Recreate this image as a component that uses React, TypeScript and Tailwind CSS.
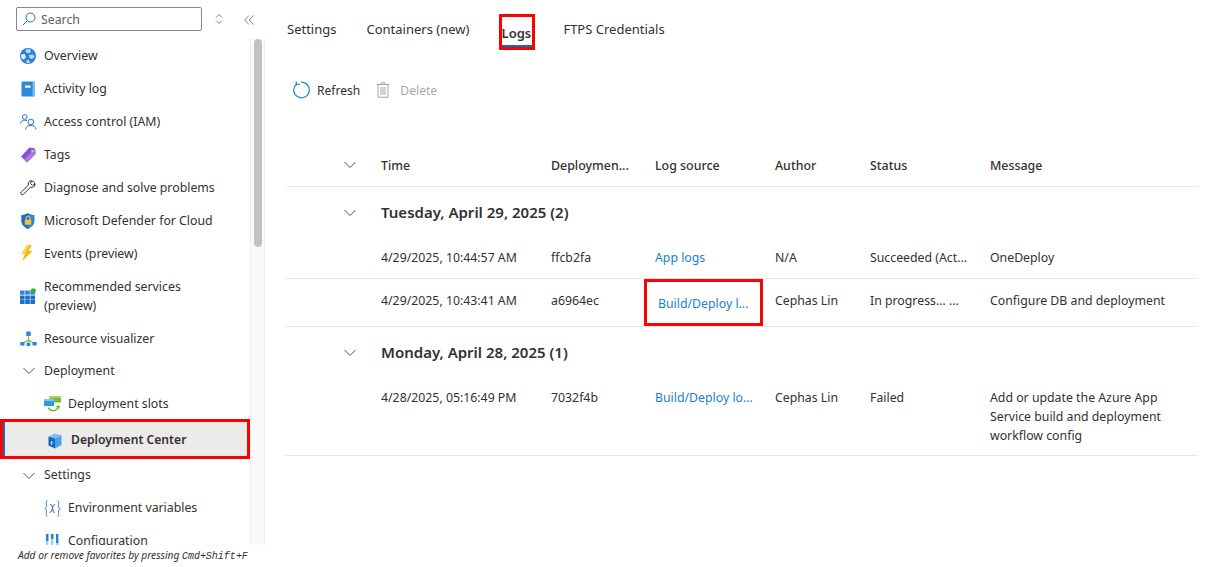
import React from "react";

function Chevron({ className = "" }: { className?: string }) {
  return (
    <svg width="14" height="14" viewBox="0 0 14 14" className={className} fill="none" stroke="#505050" strokeWidth="1">
      <path d="M1.5 4 L7 9.5 L12.5 4" />
    </svg>
  );
}

const Overview = () => (
  <svg width="16" height="16" viewBox="0 0 16 16">
    <circle cx="8" cy="8" r="8" fill="#2f7fd6" />
    <path d="M6 1.5 L10 1 L11 4 L8 5.5 L5.5 4z" fill="#bcdcf5" />
    <path d="M1 6.5 L4.5 6 L6 9 L4 11.5 L1.5 10.5z" fill="#e3f1fb" />
    <path d="M9 7 L13 6.5 L14.5 9 L12 11 L9.5 10z" fill="#bcdcf5" />
    <path d="M6 12.5 L9 12 L10 15 L7 15z" fill="#bcdcf5" />
  </svg>
);
const ActivityLog = () => (
  <svg width="16" height="16" viewBox="0 0 16 16">
    <rect x="1.5" y="0.5" width="13" height="15" rx="1.2" fill="#2b8ad8" />
    <rect x="12.5" y="0.5" width="2" height="15" rx="0.6" fill="#7ab8e8" />
    <rect x="5" y="4.5" width="5.5" height="2.2" fill="#ffffff" />
  </svg>
);
const Access = () => (
  <svg width="17" height="16" viewBox="0 0 17 16" fill="none" stroke="#1f76d2" strokeWidth="1">
    <circle cx="4.8" cy="3" r="2.3" />
    <path d="M0.5 9.5 C1 6.8 3 6.2 4.8 6.2 C5.8 6.2 6.5 6.4 7 6.7" />
    <circle cx="10.8" cy="8" r="2.8" />
    <path d="M5.5 15.5 C6 12.5 8 11.4 10.8 11.4 C13.6 11.4 15.5 12.5 16 15.5" />
  </svg>
);
const Tag = () => (
  <svg width="16" height="16" viewBox="0 0 16 16">
    <path d="M9.5 0.5 L15 1.5 L15.5 7 L7 15.5 L1 9.5z" fill="#8652d4" />
    <path d="M15 1.5 L15.5 7 L7 15.5 L4 12.5z" fill="#a77be2" />
    <circle cx="12.3" cy="4" r="1" fill="#e8dcf8" />
  </svg>
);
const Wrench = () => (
  <svg width="16" height="16" viewBox="0 0 16 16" fill="none" stroke="#303030" strokeWidth="1">
    <path d="M9.8 1 C12 0.3 15 1.5 15 4.5 C15 6.8 12.8 8 10.5 7.2 L3.6 14.2 C2.8 15 1.2 14.9 0.9 13.8 C0.6 13 0.9 12.5 1.5 11.9 L8.5 5 C8 3.5 8.3 2 9.8 1 Z" />
    <path d="M11.5 1 L10.5 3.5 L12.5 5.3 L15 4.2" />
  </svg>
);
const Shield = () => (
  <svg width="16" height="16" viewBox="0 0 16 16">
    <path d="M8 0 C10 1.5 12 2 14.5 2 L14.5 8 C14.5 12 11 14.5 8 16 C5 14.5 1.5 12 1.5 8 L1.5 2 C4 2 6 1.5 8 0z" fill="#2b87dc" />
    <path d="M8 0 C6 1.5 4 2 1.5 2 L1.5 8 C1.5 12 5 14.5 8 16z" fill="#1f6fc0" />
    <rect x="4.8" y="6.8" width="6.4" height="5" rx="0.6" fill="#f5c13d" />
    <path d="M6 7 V5.3 A2 2 0 0 1 10 5.3 V7" fill="none" stroke="#f5c13d" strokeWidth="1.1" />
  </svg>
);
const Bolt = () => (
  <svg width="14" height="17" viewBox="0 0 14 17">
    <path d="M7 0 L12 0 L8.5 6 L12.5 6 L2 16.5 L5 8.5 L1.5 8.5z" fill="#fcb714" />
    <path d="M7 0 L9.5 0 L5 8.5 L1.5 8.5z" fill="#fdd25e" />
  </svg>
);
const Grid = () => (
  <svg width="16" height="16" viewBox="0 0 16 16">
    {[2.5, 7.5, 12].map((y) =>
      [0, 5.2, 10.4].map((x) => <rect key={`${x}-${y}`} x={x} y={y} width="4.6" height="4.2" fill={y === 2.5 ? "#2a86d8" : "#1870c8"} />)
    )}
    <circle cx="13.3" cy="2.8" r="2.6" fill="#3fa845" />
  </svg>
);
const Visualizer = () => (
  <svg width="17" height="16" viewBox="0 0 17 16">
    <path d="M8.5 4 V11 M8.5 9 L2.5 12.5 M8.5 9 L14.5 12.5" stroke="#86c440" strokeWidth="1.2" fill="none" />
    <rect x="6.3" y="0.5" width="4.4" height="4.4" rx="0.5" fill="#2a86d8" />
    <rect x="0.3" y="11" width="4.2" height="3.6" rx="0.5" fill="#2a86d8" />
    <rect x="6.6" y="11.5" width="3.8" height="3.6" rx="0.5" fill="#2a86d8" />
    <rect x="12.5" y="11" width="4.2" height="3.6" rx="0.5" fill="#2a86d8" />
  </svg>
);
const Slots = () => (
  <svg width="17" height="16" viewBox="0 0 17 16">
    <rect x="5.5" y="0" width="11.5" height="6.5" fill="#7ab82f" />
    <rect x="5.5" y="0" width="11.5" height="2" fill="#a6d56a" />
    <rect x="0" y="3" width="10" height="7" fill="#2b9be0" />
    <rect x="0" y="3" width="10" height="2" fill="#7fc8f2" />
    <path d="M4.5 11.5 C5.5 15 11 16 13.5 12.5" fill="none" stroke="#6fb52c" strokeWidth="1.4" />
    <path d="M11.5 10 L16 9.5 L15 13.5z" fill="#6fb52c" />
  </svg>
);
const Cube = () => (
  <svg width="16" height="16" viewBox="0 0 16 16">
    <path d="M1.5 3.5 L8 0.5 L14.5 2.5 L8 5.5z" fill="#7cc0ef" />
    <path d="M8 5.5 L14.5 2.5 L14.5 12 L8 15.5z" fill="#4aa3e6" />
    <path d="M1.5 3.5 L8 5.5 L8 15.5 L1.5 12.5z" fill="#1768bc" />
    <path d="M4.7 12 V8.5 M3.6 9.6 L4.7 8.4 L5.8 9.6" stroke="#fff" strokeWidth="0.8" fill="none" />
  </svg>
);
const EnvVars = () => (
  <svg width="17" height="17" viewBox="0 0 17 17" fill="none" stroke="#3d8ed8" strokeWidth="1">
    <path d="M3.5 0.5 C1.5 0.5 2.5 3.5 2.5 6 C2.5 7.5 1.8 8.3 0.7 8.5 C1.8 8.7 2.5 9.5 2.5 11 C2.5 13.5 1.5 16.5 3.5 16.5" />
    <path d="M13.5 0.5 C15.5 0.5 14.5 3.5 14.5 6 C14.5 7.5 15.2 8.3 16.3 8.5 C15.2 8.7 14.5 9.5 14.5 11 C14.5 13.5 15.5 16.5 13.5 16.5" />
    <path d="M6.2 4.5 C7.5 4 8 5 8.3 7 L9.3 12 C9.8 13 10.3 12.5 10.8 12 M11.2 4.5 C10 4.5 9 6 8.5 8 C8 10 7 12.8 5.6 12.3" stroke="#505a78" />
  </svg>
);
const Config = () => (
  <svg width="14" height="16" viewBox="0 0 14 16" className="ml-px">
    <rect x="1" y="0" width="2.4" height="16" fill="#9fd4f5" />
    <rect x="1" y="0" width="2.4" height="7" fill="#1f84d8" />
    <rect x="6" y="0" width="2.4" height="16" fill="#9fd4f5" />
    <rect x="6" y="0" width="2.4" height="5" fill="#1f84d8" />
    <rect x="11" y="0" width="2.4" height="16" fill="#1f84d8" />
    <rect x="11" y="9" width="2.4" height="7" fill="#9fd4f5" />
  </svg>
);

function NavItem({ icon, label, cls = "h-[33px]" }: { icon: React.ReactNode; label: React.ReactNode; cls?: string }) {
  return (
    <div className={`flex items-center ${cls}`}>
      <div className="w-[44px] pl-[20px] flex items-center shrink-0">{icon}</div>
      <div className="leading-[19px]">{label}</div>
    </div>
  );
}
function SubItem({ icon, label, cls = "h-[33px]" }: { icon: React.ReactNode; label: string; cls?: string }) {
  return (
    <div className={`flex items-center ${cls}`}>
      <div className="w-[68px] pl-[44px] flex items-center shrink-0">{icon}</div>
      <div>{label}</div>
    </div>
  );
}
function GroupItem({ label, cls = "h-[33px]" }: { label: string; cls?: string }) {
  return (
    <div className={`flex items-center ${cls}`}>
      <div className="w-[44px] pl-[22px] flex items-center shrink-0"><Chevron /></div>
      <div>{label}</div>
    </div>
  );
}

const grid = "grid grid-cols-[96px_170px_104px_120px_95px_120px_208px]";
const mono = "font-['Liberation_Mono',monospace] text-[10px]";

export default function App() {
  return (
    <div className="flex w-[1218px] h-[567px] overflow-hidden bg-white text-[#323130] text-[12.3px] font-['Noto_Sans','Open_Sans',sans-serif]">
      <aside className="w-[265px] shrink-0 flex flex-col h-full">
        <div className="h-[39px] flex items-start pt-[7px] pl-[16px] shrink-0">
          <div className="w-[186px] h-[24px] border border-[#8a8886] rounded-[2px] flex items-center pl-[5px] gap-[5px] text-[#605e5c]">
            <svg width="14" height="14" viewBox="0 0 14 14" fill="none" stroke="#1f76d2" strokeWidth="1">
              <circle cx="8.5" cy="5.5" r="4.5" />
              <path d="M5.2 8.8 L0.8 13.2" />
            </svg>
            <span className="pt-[2px]">Search</span>
          </div>
          <svg width="10" height="12" viewBox="0 0 10 12" className="ml-[12px] mt-[6px]" fill="none" stroke="#777" strokeWidth="0.9">
            <path d="M2 4.5 L5 1.5 L8 4.5 M2 7.5 L5 10.5 L8 7.5" />
          </svg>
          <svg width="10" height="10" viewBox="0 0 10 10" className="ml-[20px] mt-[8px]" fill="none" stroke="#777" strokeWidth="0.9">
            <path d="M5 0.5 L0.7 5 L5 9.5 M9.5 0.5 L5.2 5 L9.5 9.5" />
          </svg>
        </div>
        <div className="flex-1 min-h-0 flex">
          <nav className="w-[250px] shrink-0 overflow-hidden">
            <NavItem icon={<Overview />} label="Overview" />
            <NavItem icon={<ActivityLog />} label="Activity log" />
            <NavItem icon={<Access />} label="Access control (IAM)" />
            <NavItem icon={<Tag />} label="Tags" />
            <NavItem icon={<Wrench />} label="Diagnose and solve problems" />
            <NavItem icon={<Shield />} label="Microsoft Defender for Cloud" />
            <NavItem icon={<Bolt />} label="Events (preview)" />
            <NavItem icon={<Grid />} label={<>Recommended services<br />(preview)</>} cls="h-[52px]" />
            <NavItem icon={<Visualizer />} label="Resource visualizer" />
            <GroupItem label="Deployment" cls="h-[32px]" />
            <SubItem icon={<Slots />} label="Deployment slots" cls="h-[32px] pt-[2px]" />
            <div className="h-[40px] border-[3px] border-[#ff0000] flex items-center bg-[#edebe9] font-semibold text-[12.15px] relative pt-[3px]">
              <div className="absolute left-0 top-0 bottom-0 w-[2px] bg-[#0f6cbd]" />
              <div className="w-[68px] pl-[47px] shrink-0 flex items-center -ml-[3px] mr-[3px]"><Cube /></div>
              <span>Deployment Center</span>
            </div>
            <GroupItem label="Settings" />
            <SubItem icon={<EnvVars />} label="Environment variables" />
            <SubItem icon={<Config />} label="Configuration" />
          </nav>
          <div className="w-[15px] shrink-0 bg-[#fafafa] border-x border-[#eeeeee] flex justify-center">
            <div className="w-[8px] h-[208px] bg-[#c1c1c1] rounded-full" />
          </div>
        </div>
        <div className="h-[22px] shrink-0 bg-white pl-[18px] text-[10.2px] italic leading-[21px] text-[#323130] whitespace-nowrap">
          Add or remove favorites by pressing <span className={mono}>Cmd</span>+<span className={mono}>Shift</span>+<span className={mono}>F</span>
        </div>
      </aside>

      <main className="flex-1 min-w-0 pl-[20px]">
        <div className="flex items-start h-[50px] text-[13px]">
          <div className="mt-[20px] leading-[18px] mr-[30px] ml-[2px]">Settings</div>
          <div className="mt-[20px] leading-[18px] mr-[30px]">Containers (new)</div>
          <div className="mt-[14px] h-[36px] w-[36px] border-[3px] border-[#ff0000] mr-[28px] flex flex-col items-center justify-end font-semibold">
            <span className="leading-[18px] pb-[3px] -ml-[2px]">Logs</span>
            <div className="h-[2px] w-[30px] bg-[#0f6cbd]" />
          </div>
          <div className="mt-[20px] leading-[18px]">FTPS Credentials</div>
        </div>
        <div className="flex items-center h-[80px] pl-[7px] text-[12.1px]">
          <svg width="18" height="18" viewBox="0 0 18 18" fill="none" stroke="#1f84d8" strokeWidth="1.2">
            <path d="M4.5 3 A7.8 7.8 0 1 0 9 1.2" />
            <path d="M4.2 0.5 L4.5 3.6 L7.8 3.4" />
          </svg>
          <span className="ml-[7px] pt-[2px]">Refresh</span>
          <svg width="14" height="16" viewBox="0 0 14 16" className="ml-[16px]" fill="none" stroke="#a6a6a6" strokeWidth="1">
            <path d="M0.5 2.5 H13.5 M5 2.5 V0.8 H9 V2.5 M2 2.5 V15.2 H12 V2.5 M5 5 V13 M7 5 V13 M9 5 V13" />
          </svg>
          <span className="ml-[10px] pt-[2px] text-[#a6a6a6]">Delete</span>
        </div>

        <div className="w-[913px]">
          <div className={`${grid} h-[57px] items-end pb-[10px] border-b border-[#e8e8e8] font-medium text-[12.4px]`}>
            <div className="pl-[58px] pb-[4px]"><Chevron /></div>
            <div>Time</div>
            <div className="whitespace-nowrap">Deploymen...</div>
            <div>Log source</div>
            <div>Author</div>
            <div>Status</div>
            <div>Message</div>
          </div>
          <div className="flex items-center h-[51px] text-[15px] font-semibold">
            <div className="w-[96px] pl-[58px]"><Chevron /></div>
            <div>Tuesday, April 29, 2025 (2)</div>
          </div>
          <div className={`${grid} h-[41px] items-center border-b border-[#e8e8e8]`}>
            <div />
            <div>4/29/2025, 10:44:57 AM</div>
            <div>ffcb2fa</div>
            <div className="text-[#1a7fd4]">App logs</div>
            <div>N/A</div>
            <div>Succeeded (Act...</div>
            <div>OneDeploy</div>
          </div>
          <div className={`${grid} h-[48px] border-b border-[#e8e8e8] items-start`}>
            <div />
            <div className="pt-[13px]">4/29/2025, 10:43:41 AM</div>
            <div className="pt-[13px]">a6964ec</div>
            <div className="h-[47px] -ml-[11px] mr-[12px] border-[3px] border-[#ff0000] flex items-center pl-[11px] pt-[3px] text-[#1a7fd4] whitespace-nowrap">Build/Deploy l...</div>
            <div className="pt-[13px]">Cephas Lin</div>
            <div className="pt-[13px]">In progress... ...</div>
            <div className="pt-[13px]">Configure DB and deployment</div>
          </div>
          <div className="flex items-center h-[51px] text-[15px] font-semibold">
            <div className="w-[96px] pl-[58px]"><Chevron /></div>
            <div>Monday, April 28, 2025 (1)</div>
          </div>
          <div className={`${grid} h-[78px] items-start pt-[10px] leading-[19px] border-b border-[#e8e8e8]`}>
            <div />
            <div>4/28/2025, 05:16:49 PM</div>
            <div>7032f4b</div>
            <div className="text-[#1a7fd4]">Build/Deploy lo...</div>
            <div>Cephas Lin</div>
            <div>Failed</div>
            <div>Add or update the Azure App<br />Service build and deployment<br />workflow config</div>
          </div>
        </div>
      </main>
    </div>
  );
}
